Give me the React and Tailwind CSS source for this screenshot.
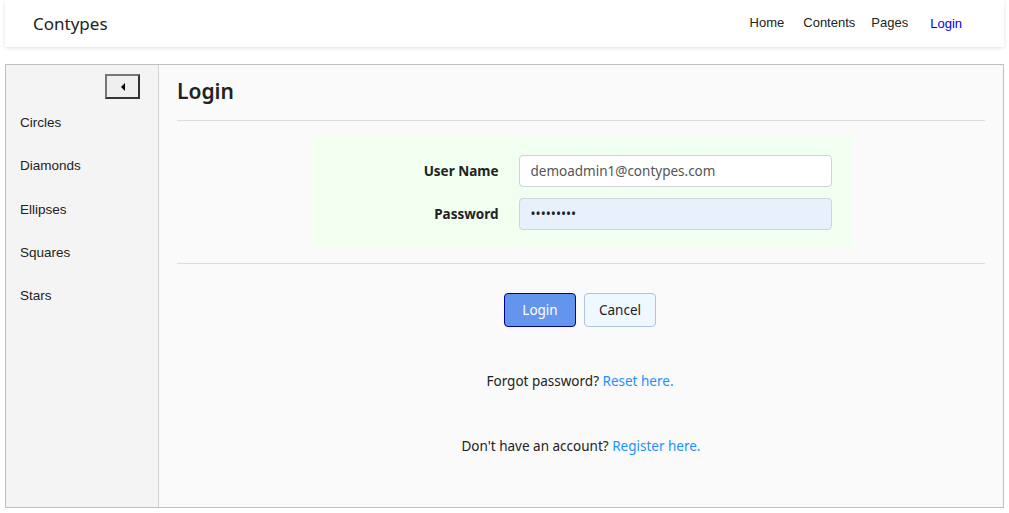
import { useState } from 'react';

const shapes = ['Circles', 'Diamonds', 'Ellipses', 'Squares', 'Stars'];
const segoe = "font-['Noto_Sans',sans-serif]";
const arial = "font-['Liberation_Sans',Arial,sans-serif]";

function Header() {
  return (
    <header className="mx-[5px] h-[47px] bg-white shadow-[0_1px_4px_rgba(0,0,0,0.12)] flex items-center justify-between">
      <div className={`${segoe} pl-[28px] text-[17px] text-[#222]`}>Contypes</div>
      <nav className={`${arial} flex items-center text-[13px] text-[#222] pr-[42px] -mt-[1px]`}>
        <a className="mr-[19px]">Home</a>
        <a className="mr-[16px]">Contents</a>
        <a className="mr-[22px]">Pages</a>
        <a className="text-[#0000ee] mt-[1px]">Login</a>
      </nav>
    </header>
  );
}

function Sidebar() {
  return (
    <aside className="w-[153px] shrink-0 bg-[#f4f4f4] border-r border-[#d4d4d4]">
      <div className="flex justify-end pr-[18px] pt-[9px]">
        <button className="w-[35px] h-[25px] bg-[#efefef] border-2 border-t-[#767676] border-l-[#767676] border-b-[#333] border-r-[#333] flex items-center justify-center">
          <svg width="6" height="8" viewBox="0 0 6 8">
            <path d="M5 0 L1 4 L5 8 Z" fill="#000" />
          </svg>
        </button>
      </div>
      <ul className={`${arial} text-[13.5px] text-[#222] pl-[14px] pt-[16px]`}>
        {shapes.map(s => (
          <li key={s} className="h-[43.3px] leading-[16px]">{s}</li>
        ))}
      </ul>
    </aside>
  );
}

function LoginForm() {
  const [user, setUser] = useState('demoadmin1@contypes.com');
  const [pass, setPass] = useState('123456789');

  return (
    <div className={`${segoe} flex-1 px-[18px] pt-[11px]`}>
      <h1 className="text-[21px] font-semibold text-[#222] leading-[30px] pb-[14px] border-b border-[#dedede]">Login</h1>

      <div className="mx-auto mt-[15px] w-[539px] bg-[#f0fff0] pt-[19px] pb-[18px] pr-[19px] flex flex-col gap-[11px]">
        <div className="flex items-center">
          <label className="w-[187px] text-right text-[13.5px] font-bold text-[#222]">User Name</label>
          <input
            value={user}
            onChange={e => setUser(e.target.value)}
            className="ml-[20px] w-[313px] h-[32px] rounded-[4px] border border-[#ced4da] bg-white px-[11px] text-[13.5px] text-[#555] outline-none"
          />
        </div>
        <div className="flex items-center">
          <label className="w-[187px] text-right text-[13.5px] font-bold text-[#222]">Password</label>
          <input
            type="password"
            value={pass}
            onChange={e => setPass(e.target.value)}
            className="ml-[20px] w-[313px] h-[32px] rounded-[4px] border border-[#ced4da] bg-[#e8f0fe] px-[11px] text-[13.5px] text-[#222] outline-none"
          />
        </div>
      </div>

      <div className="mt-[15px] border-t border-[#dedede]" />

      <div className="mt-[29px] flex justify-center gap-[8px] pr-[2px]">
        <button className="w-[72px] h-[34px] rounded-[4px] bg-[#6495ed] border border-[#00008b] text-white text-[13.5px]">Login</button>
        <button className="w-[72px] h-[34px] rounded-[4px] bg-[#f0f8ff] border border-[#b0c4de] text-[#222] text-[13.5px]">Cancel</button>
      </div>

      <p className="mt-[44px] text-center text-[13.5px] text-[#222] pr-[2px]">
        Forgot password? <a className="text-[#1e90ff]">Reset here.</a>
      </p>
      <p className="mt-[45px] text-center text-[13.5px] text-[#222]">
        Don't have an account? <a className="text-[#1e90ff]">Register here.</a>
      </p>
    </div>
  );
}

export default function App() {
  return (
    <div className="min-h-screen bg-white">
      <Header />
      <main className="mx-[5px] mt-[17px] h-[444px] border border-[#c0c0c0] bg-[#fafafa] flex">
        <Sidebar />
        <LoginForm />
      </main>
    </div>
  );
}
